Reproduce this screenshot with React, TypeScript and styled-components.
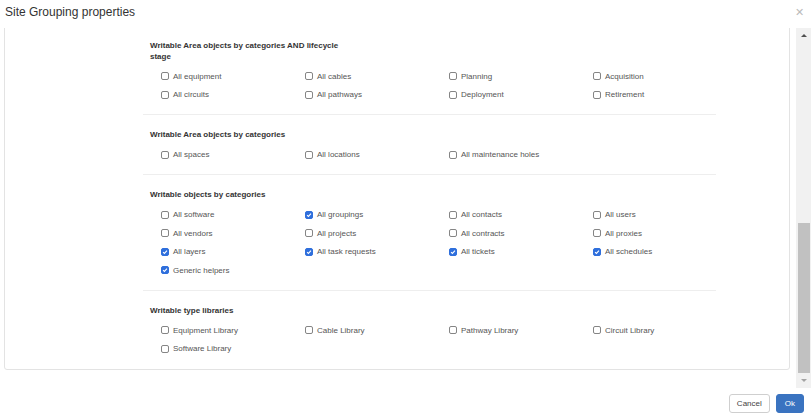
import { useLayoutEffect, useRef, useState } from "react";
import styled, { createGlobalStyle } from "styled-components";

interface OptionI {
    label: string;
    checked?: boolean;
}
interface SectionI {
    title: string;
    options: OptionI[];
}

const opts = (labels: string[], checked: string[] = []): OptionI[] =>
    labels.map(label => ({ label, checked: checked.includes(label) }));

const lifecycle = ["All equipment", "All cables", "Planning", "Acquisition", "All circuits", "All pathways", "Deployment", "Retirement"];
const area = ["All spaces", "All locations", "All maintenance holes"];
const objects = [
    "All software", "All groupings", "All contacts", "All users",
    "All vendors", "All projects", "All contracts", "All proxies",
    "All layers", "All task requests", "All tickets", "All schedules",
    "Generic helpers",
];
const libraries = ["Equipment Library", "Cable Library", "Pathway Library", "Circuit Library", "Software Library"];
const onByDefault = ["All groupings", "All layers", "All task requests", "All tickets", "All schedules", "Generic helpers"];

const sections: SectionI[] = [
    { title: "General permissions", options: opts(["Read", "Write", "Delete", "Manage"], ["Read"]) },
    { title: "Readable Area objects by categories AND lifecycle stage", options: opts(lifecycle) },
    { title: "Readable Area objects by categories", options: opts(area) },
    { title: "Readable objects by categories", options: opts(objects, onByDefault) },
    { title: "Readable type libraries", options: opts(libraries) },
    { title: "Writable Area objects by categories AND lifecycle stage", options: opts(lifecycle) },
    { title: "Writable Area objects by categories", options: opts(area) },
    { title: "Writable objects by categories", options: opts(objects, onByDefault) },
    { title: "Writable type libraries", options: opts(libraries) },
];

const GlobalStyle = createGlobalStyle`
    html, body {
        margin: 0;
        padding: 0;
        background: #fff;
        font-family: "Liberation Sans", Arial, sans-serif;
    }
    * { box-sizing: border-box; }
`;

const Dialog = styled.div`
    width: 811px;
    height: 419px;
    display: flex;
    flex-direction: column;
    background: #fff;
`;
const TitleBar = styled.div`
    height: 28px;
    flex: none;
    display: flex;
    justify-content: space-between;
    align-items: flex-start;
    padding: 5px 7px 0 5px;
`;
const Title = styled.h1`
    margin: 0;
    font-size: 12px;
    line-height: 14px;
    font-weight: normal;
    color: #333;
`;
const Close = styled.span`
    font-size: 11px;
    line-height: 14px;
    color: #bbb;
`;
const Frame = styled.div`
    height: 360px;
    flex: none;
    display: flex;
`;
const Body = styled.div`
    flex: 1;
    overflow-y: auto;
    scrollbar-width: none;
    padding: 0 6px 18px 4px;
    &::-webkit-scrollbar { display: none; }
`;
const ScrollBar = styled.div`
    width: 15px;
    flex: none;
    display: flex;
    flex-direction: column;
    background: #f1f1f1;
`;
const ArrowButton = styled.div<{ $down?: boolean }>`
    height: 15px;
    flex: none;
    display: flex;
    align-items: center;
    justify-content: center;
    &::after {
        content: "";
        border-left: 3px solid transparent;
        border-right: 3px solid transparent;
        ${({ $down }) => ($down ? "border-top: 3px solid #a3a3a3;" : "border-bottom: 3px solid #505050;")}
    }
`;
const Track = styled.div`
    flex: 1;
    position: relative;
`;
const Thumb = styled.div`
    position: absolute;
    left: 2px;
    right: 1px;
    background: #c1c1c1;
`;
const Panel = styled.div`
    border: 1px solid #e3e3e3;
    border-radius: 3px;
    padding: 25px 73px 0 138px;
`;
const Section = styled.div<{ $last?: boolean }>`
    padding: 14px 0 ${({ $last }) => ($last ? "11px" : "10px")};
    border-bottom: ${({ $last }) => ($last ? "none" : "1px solid #eeeeee")};
`;
const Heading = styled.div`
    max-width: 205px;
    padding-left: 7px;
    font-size: 8px;
    line-height: 11px;
    font-weight: bold;
    color: #333;
`;
const Grid = styled.div`
    margin-top: 5.5px;
    padding-left: 18px;
    display: grid;
    grid-template-columns: repeat(4, 144px);
    grid-auto-rows: 18.5px;
`;
const Item = styled.label`
    display: flex;
    align-items: center;
    gap: 4px;
    font-size: 8px;
    color: #555;
    white-space: nowrap;
`;
const Box = styled.span<{ $checked?: boolean }>`
    width: 8px;
    height: 8px;
    flex: none;
    display: flex;
    align-items: center;
    justify-content: center;
    border-radius: 2px;
    border: 1px solid ${({ $checked }) => ($checked ? "#2f6fdc" : "#858585")};
    background: ${({ $checked }) => ($checked ? "#2f6fdc" : "#fff")};
`;
const Footer = styled.div`
    flex: 1;
    display: flex;
    justify-content: flex-end;
    align-items: flex-start;
    gap: 6px;
    padding: 6px 7px 0 0;
`;
const Button = styled.button<{ $primary?: boolean }>`
    height: 19px;
    padding: 0 ${({ $primary }) => ($primary ? "8px" : "7px")};
    font-family: inherit;
    font-size: 8px;
    border-radius: 3px;
    border: 1px solid ${({ $primary }) => ($primary ? "#3a73c0" : "#cfcfcf")};
    background: ${({ $primary }) => ($primary ? "#3a73c0" : "#fff")};
    color: ${({ $primary }) => ($primary ? "#fff" : "#444")};
`;

const Check = ({ label, checked }: OptionI) => (
    <Item>
        <Box $checked={checked}>
            {checked && (
                <svg width="6" height="6" viewBox="0 0 10 10">
                    <path d="M1.8 5.2 L4 7.4 L8.3 2.6" fill="none" stroke="#fff" strokeWidth="1.8" />
                </svg>
            )}
        </Box>
        {label}
    </Item>
);

const App = () => {
    const bodyRef = useRef<HTMLDivElement>(null);
    const trackRef = useRef<HTMLDivElement>(null);
    const [thumb, setThumb] = useState({ top: 0, height: 0 });

    const measure = () => {
        const b = bodyRef.current;
        const t = trackRef.current;
        if (!b || !t) return;
        const trackH = t.clientHeight;
        const height = Math.max(20, (b.clientHeight / b.scrollHeight) * trackH);
        const range = b.scrollHeight - b.clientHeight;
        const top = range > 0 ? (b.scrollTop / range) * (trackH - height) : 0;
        setThumb({ top, height });
    };

    useLayoutEffect(() => {
        if (bodyRef.current) bodyRef.current.scrollTop = bodyRef.current.scrollHeight;
        measure();
    }, []);

    return (
        <>
            <GlobalStyle />
            <Dialog>
                <TitleBar>
                    <Title>Site Grouping properties</Title>
                    <Close>✕</Close>
                </TitleBar>
                <Frame>
                    <Body ref={bodyRef} onScroll={measure}>
                        <Panel>
                            {sections.map((s, i) => (
                                <Section key={s.title} $last={i === sections.length - 1}>
                                    <Heading>{s.title}</Heading>
                                    <Grid>
                                        {s.options.map(o => (
                                            <Check key={o.label} {...o} />
                                        ))}
                                    </Grid>
                                </Section>
                            ))}
                        </Panel>
                    </Body>
                    <ScrollBar>
                        <ArrowButton />
                        <Track ref={trackRef}>
                            <Thumb style={{ top: thumb.top, height: thumb.height }} />
                        </Track>
                        <ArrowButton $down />
                    </ScrollBar>
                </Frame>
                <Footer>
                    <Button>Cancel</Button>
                    <Button $primary>Ok</Button>
                </Footer>
            </Dialog>
        </>
    );
};
export default App;
